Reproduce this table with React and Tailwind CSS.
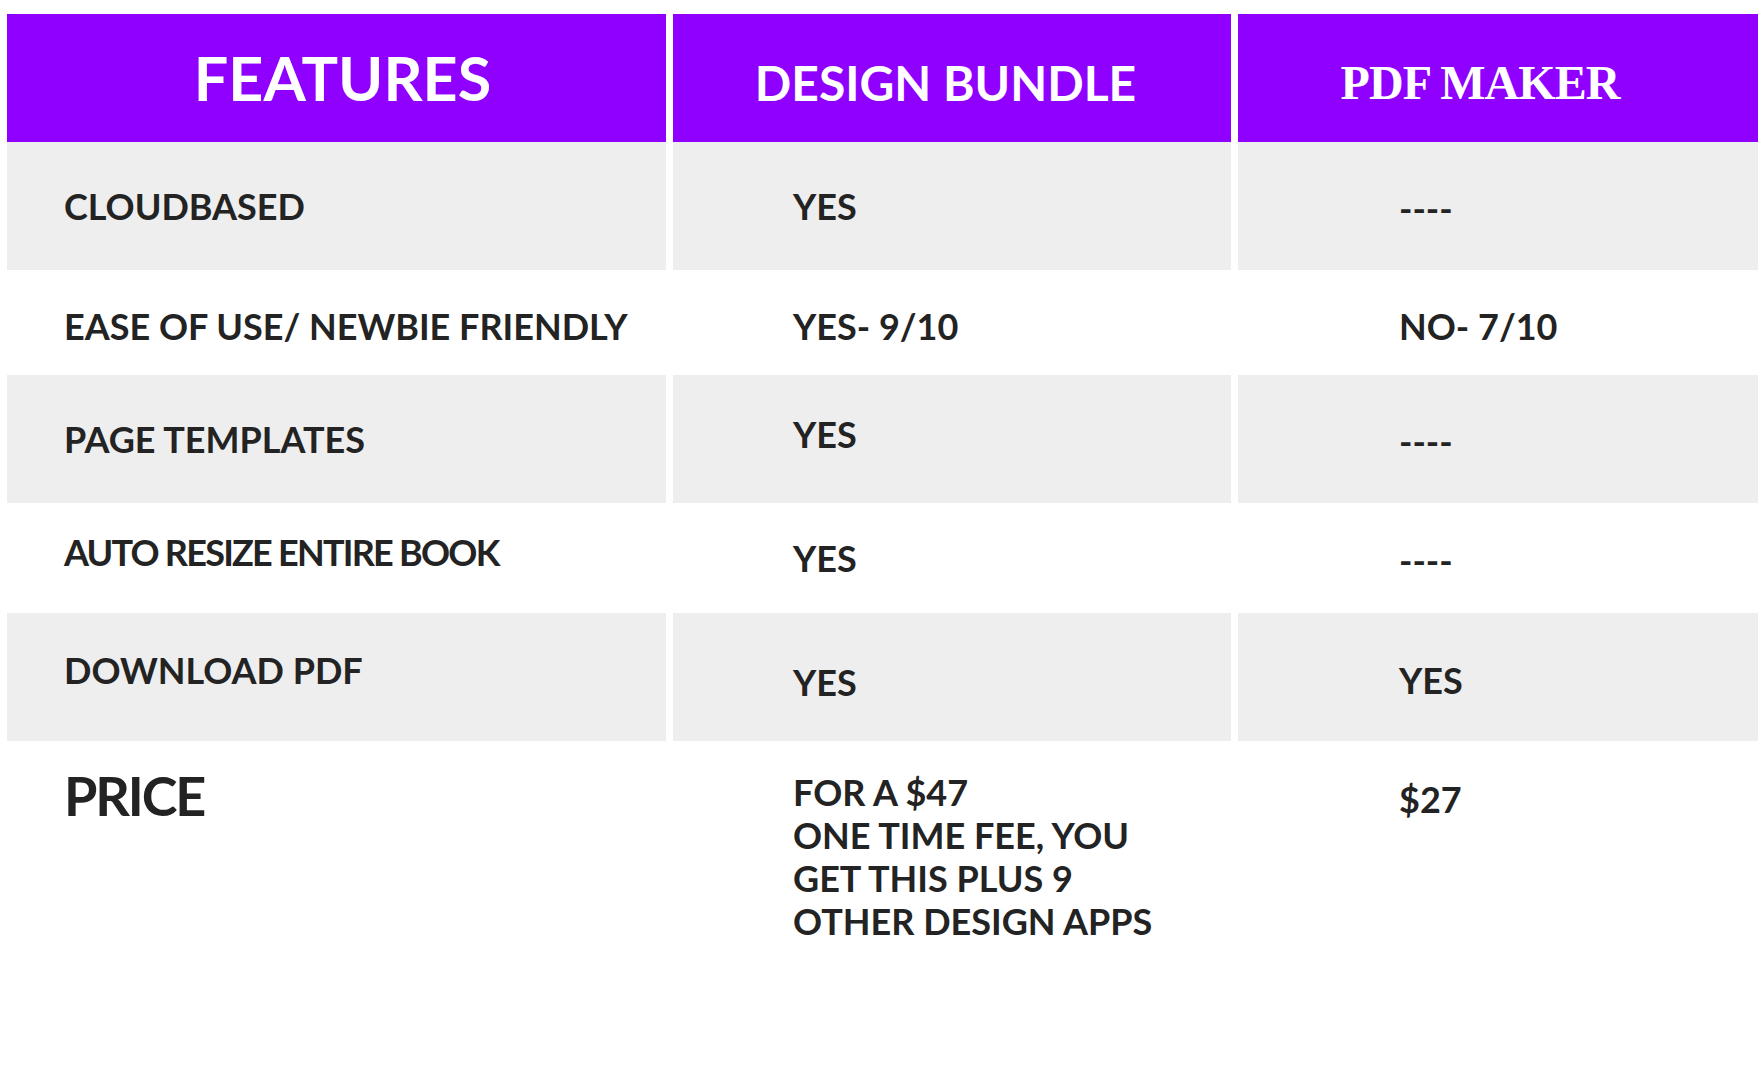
import React from 'react';

const rows = [
  {
    bg: 'bg-[#eeeeee]',
    h: 'h-[128px]',
    cells: [
      { text: 'CLOUDBASED', cls: '' },
      { text: 'YES', cls: '' },
      { text: '----', cls: 'pt-[4px]' },
    ],
  },
  {
    bg: 'bg-white',
    h: 'h-[105px]',
    cells: [
      { text: 'EASE OF USE/ NEWBIE FRIENDLY', cls: 'pt-[6px]' },
      { text: 'YES- 9/10', cls: 'pt-[6px]' },
      { text: 'NO- 7/10', cls: 'pt-[6px]' },
    ],
  },
  {
    bg: 'bg-[#eeeeee]',
    h: 'h-[128px]',
    cells: [
      { text: 'PAGE TEMPLATES', cls: '' },
      { text: 'YES', cls: 'pb-[10px]' },
      { text: '----', cls: 'pt-[4px]' },
    ],
  },
  {
    bg: 'bg-white',
    h: 'h-[110px]',
    cells: [
      { text: 'AUTO RESIZE ENTIRE BOOK', cls: 'pb-[12px] tracking-[-0.11em]' },
      { text: 'YES', cls: '' },
      { text: '----', cls: 'pt-[4px]' },
    ],
  },
  {
    bg: 'bg-[#eeeeee]',
    h: 'h-[128px]',
    cells: [
      { text: 'DOWNLOAD PDF', cls: 'pb-[14px]' },
      { text: 'YES', cls: 'pt-[10px]' },
      { text: 'YES', cls: 'pt-[6px]' },
    ],
  },
];

const pads = ['pl-[57px]', 'pl-[120px]', 'pl-[161px]'];

export default function App() {
  return (
    <div className="min-h-screen bg-white pt-[14px] pl-[7px] font-['Lato','Liberation_Sans',sans-serif] text-[#232323]">
      <div className="grid grid-cols-[659px_558px_520px] gap-x-[7px]">
        {/* Header */}
        <div className="h-[128px] bg-[#8f00ff] flex items-center justify-center pb-[2px] pl-[12px]">
          <span className="text-[61px] font-bold leading-none text-white">FEATURES</span>
        </div>
        <div className="h-[128px] bg-[#8f00ff] flex items-center justify-center pt-[10px] pr-[13px]">
          <span className="text-[48px] font-bold leading-none text-white">DESIGN BUNDLE</span>
        </div>
        <div className="h-[128px] bg-[#8f00ff] flex items-center justify-center pt-[10px] pr-[36px]">
          <span className="text-[48px] font-bold leading-none text-white font-['Liberation_Serif','Times_New_Roman',serif] tracking-[-0.02em]">
            PDF MAKER
          </span>
        </div>

        {rows.map((row, i) =>
          row.cells.map((c, j) => (
            <div
              key={`${i}-${j}`}
              className={`${row.h} ${row.bg} flex items-center ${pads[j]} ${c.cls}`}
            >
              <span className="text-[36px] font-bold leading-none whitespace-nowrap">{c.text}</span>
            </div>
          ))
        )}

        {/* Price row */}
        <div className="h-[220px] pl-[57px] pt-[28px]">
          <span className="block text-[54px] font-bold leading-none tracking-[-0.04em]">PRICE</span>
        </div>
        <div className="h-[220px] pl-[120px] pt-[30px]">
          <p className="text-[36px] font-bold leading-[43px]">
            FOR A $47
            <br />
            ONE TIME FEE, YOU
            <br />
            GET THIS PLUS 9
            <br />
            OTHER DESIGN APPS
          </p>
        </div>
        <div className="h-[220px] pl-[161px] pt-[37px]">
          <p className="text-[36px] font-bold leading-[43px]">$27</p>
        </div>
      </div>
    </div>
  );
}
